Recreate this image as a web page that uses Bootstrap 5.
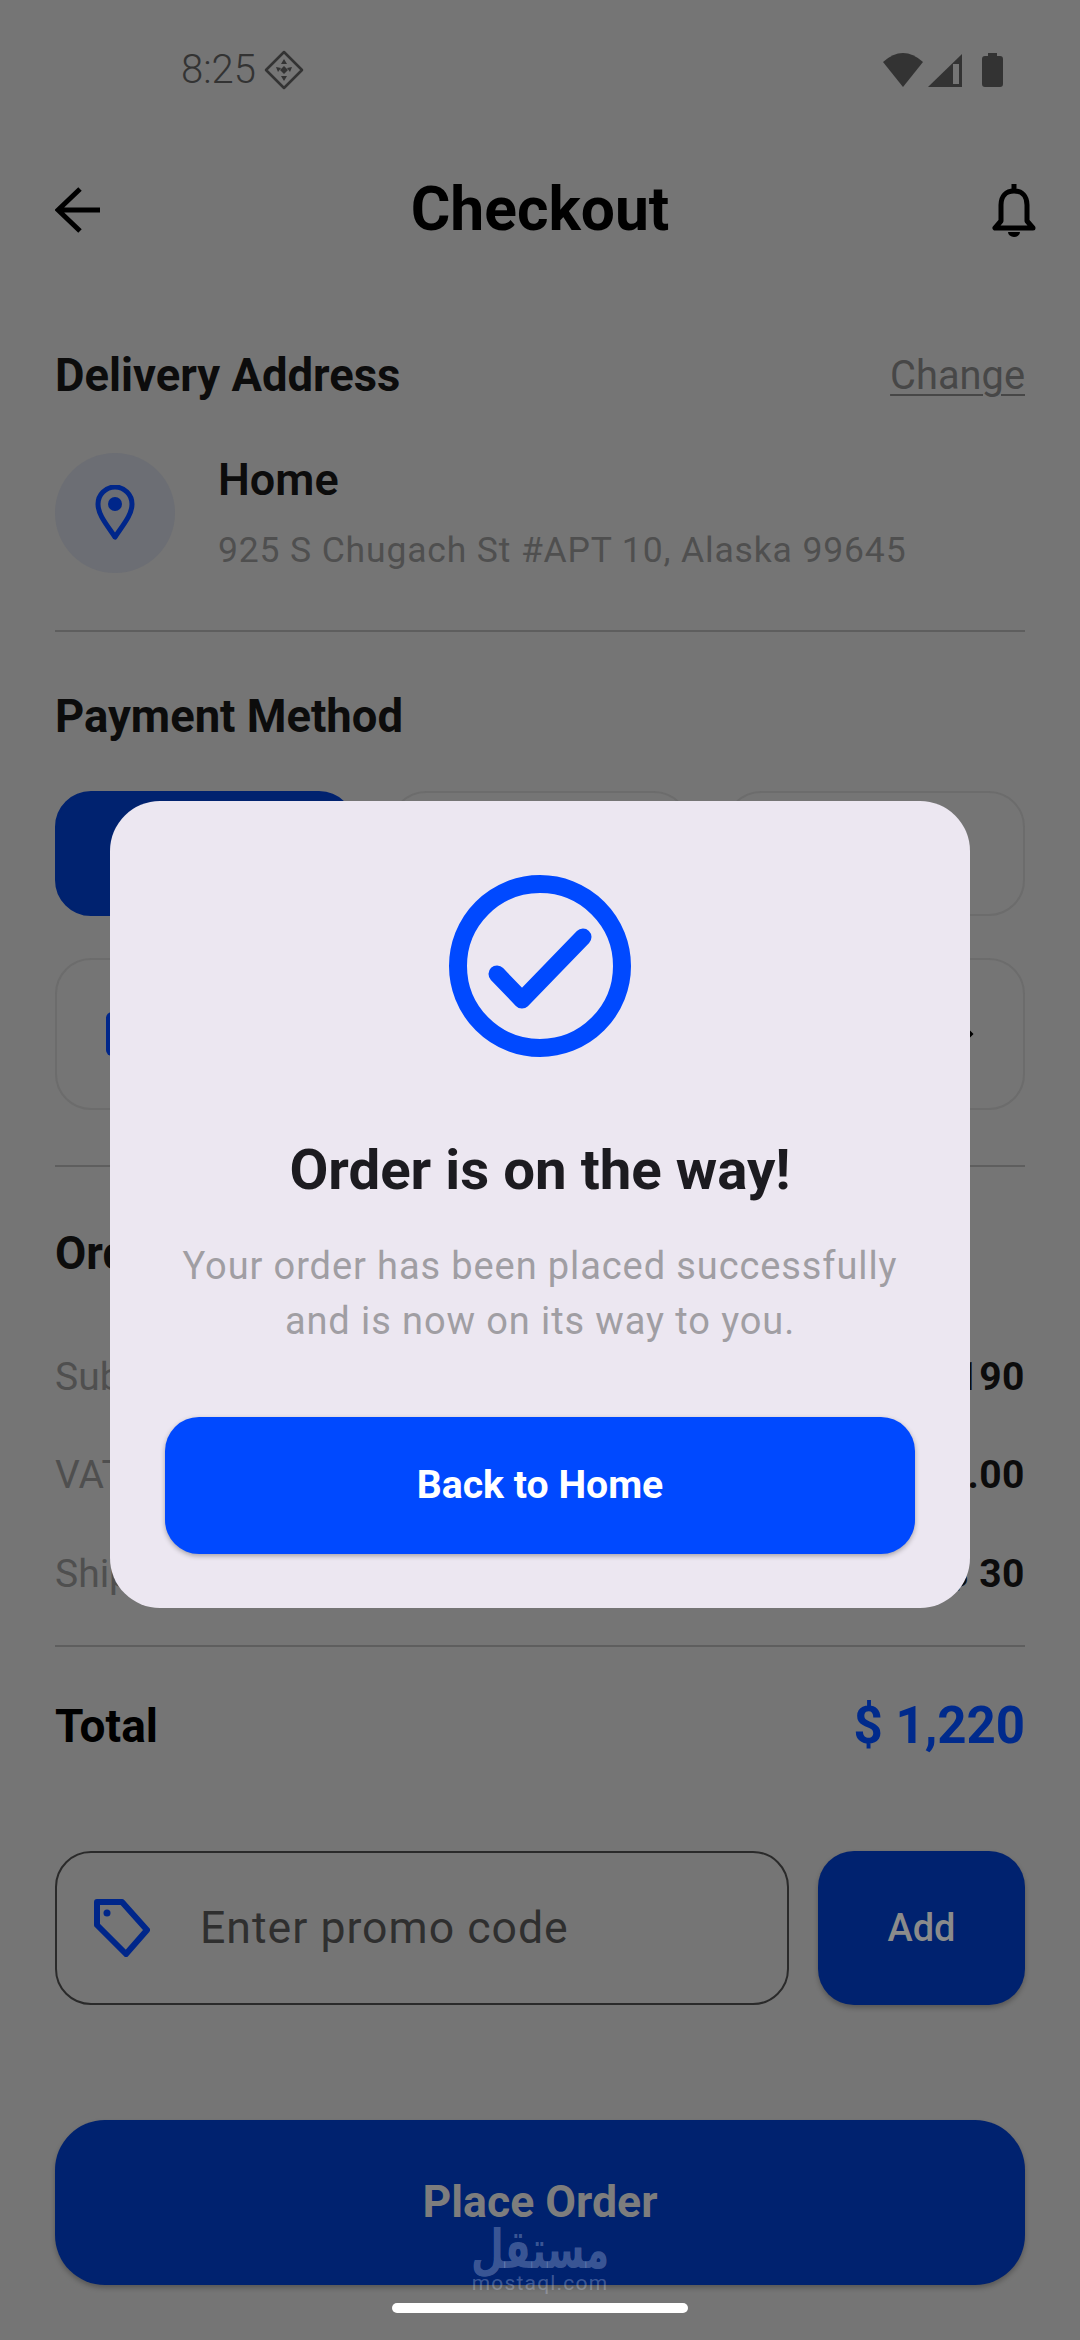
<!DOCTYPE html>
<html lang="en">
<head>
    <meta charset="UTF-8">
    <title>Checkout</title>
    <link href="https://cdn.jsdelivr.net/npm/bootstrap@5.3.0/dist/css/bootstrap.min.css" rel="stylesheet">
    <style>
        html, body { margin: 0; background: #757575; }
        .phone-page {
            position: relative;
            width: 1080px;
            height: 2340px;
            overflow: hidden;
            background: #757575;
            font-family: Roboto, "Liberation Sans", sans-serif;
            color: #0c0c0c;
        }
        .status-row { height: 140px; padding: 0 77px 0 181px; color: #333; font-size: 40px; font-weight: 300; }
        .top-row { height: 140px; padding: 0 55px; display: grid; grid-template-columns: 1fr auto 1fr; align-items: center; }
        .bell-icon { justify-self: end; margin-right: -11px; }
        .page-title { font-size: 60.5px; font-weight: 700; margin: 0; color: #000; }
        .body-wrap { padding: 0 55px; }
        .sec-row { height: 60px; }
        .sec-title { font-size: 45.4px; font-weight: 700; margin: 0; }
        .change-link { font-size: 39.8px; color: #474747; text-decoration: underline; text-underline-offset: 5px; text-decoration-thickness: 2px; }
        .pin-circle { width: 120px; height: 120px; background: #6c6e74; flex: none; }
        .addr-name { font-size: 45px; font-weight: 600; line-height: 60px; }
        .addr-line { font-size: 35.5px; line-height: 60px; margin-top: 10px; color: #4f4f4f; letter-spacing: .85px; }
        .thin-rule { height: 2px; background: #5e5e5e; }
        .pay-tab { width: 300px; height: 125px; border: 2px solid #6c6c6c; border-radius: 36px; }
        .pay-tab-on { background: #00226f; border-color: #00226f; }
        .pay-card { height: 152px; border: 2px solid #6c6c6c; border-radius: 36px; padding: 0 49px; }
        .card-thumb { width: 60px; height: 44px; background: #00268a; border-radius: 6px; }
        .sum-row { height: 60px; font-size: 39px; }
        .sum-label { color: #4f4f4f; }
        .sum-value { font-weight: 700; color: #0c0c0c; letter-spacing: .5px; }
        .total-label { font-size: 46px; font-weight: 700; color: #000; }
        .total-value { font-size: 51px; font-weight: 700; color: #002a8c; }
        .promo-box { width: 734px; height: 154px; border: 2px solid #2a2a2a; border-radius: 36px; padding-left: 37px; }
        .promo-text { font-size: 44.6px; color: #2f2f2f; margin-left: 50px; letter-spacing: 1px; }
        .add-btn { width: 207px; height: 154px; border: 0; border-radius: 36px; background: #00226f; color: #8b8b8b; font-size: 38px; font-weight: 500; box-shadow: 0 3px 5px rgba(0,0,0,.25); }
        .place-btn { height: 165px; border: 0; border-radius: 50px; background: #00226f; color: #7d7d7d; font-size: 44.6px; font-weight: 700; padding: 0 0 2px; line-height: 52px; box-shadow: 0 3px 5px rgba(0,0,0,.25); }
        .success-box {
            position: absolute;
            left: 110px;
            top: 801px;
            width: 860px;
            height: 807px;
            background: #ece7f1;
            border-radius: 50px;
            padding: 74px 55px 0;
            text-align: center;
        }
        .success-title { font-size: 56.4px; font-weight: 700; color: #1c1b20; margin: 83px 0 0; line-height: 60px; }
        .success-text { font-size: 38px; line-height: 55px; color: #a09ea3; margin: 39px 0 0; letter-spacing: .9px; }
        .home-btn { height: 137px; width: 750px; border: 0; border-radius: 34px; background: #0049ff; color: #fff; font-size: 39.2px; font-weight: 700; margin-top: 68px; box-shadow: 0 2px 5px rgba(0,0,0,.3); }
        .wm-wrap { position: absolute; left: 440px; top: 2230px; width: 200px; text-align: center; color: rgba(205,218,245,.3); }
        .wm-ar { font-family: "DejaVu Sans", sans-serif; font-weight: 700; font-size: 54px; line-height: 40px; transform: scaleX(.7); }
        .wm-en { font-size: 21px; line-height: 20px; letter-spacing: 1.2px; margin-top: 3px; }
        .home-bar { position: absolute; left: 392px; top: 2303px; width: 296px; height: 10px; background: #fff; border-radius: 5px; }
    </style>
</head>
<body>

<div class="phone-page">
    <!-- Status bar -->
    <div class="status-row d-flex align-items-center justify-content-between">
        <div class="d-flex align-items-center gap-2">
            <span>8:25</span>
            <svg width="40" height="40" viewBox="0 0 40 40">
                <path d="M20 2 38 20 20 38 2 20Z" fill="none" stroke="#333" stroke-width="2.5" stroke-linejoin="round"/>
                <path d="M20 9l3 5h-6zM12 17l5 1-3 4zM28 17l-5 1 3 4zM20 31l-3-5h6zM20 16l4 4-4 4-4-4z" fill="#333"/>
            </svg>
        </div>
        <svg width="120" height="36" viewBox="883 52 120 36" fill="#333">
            <path d="M883 62Q903 44 923 62L903 87Z"/>
            <path d="M928 87 962 54V87Z"/>
            <path d="M953 64h6v20h-6z" fill="#757575"/>
            <path d="M988 53h9v3h3q3 0 3 3v25q0 3-3 3h-15q-3 0-3-3V59q0-3 3-3h3z"/>
        </svg>
    </div>

    <!-- Header -->
    <div class="top-row">
        <svg width="46" height="46" viewBox="0 0 46 46" fill="none" stroke="#000" stroke-width="5">
            <path d="M45 23H4M25 2 3 23 25 44"/>
        </svg>
        <h1 class="page-title">Checkout</h1>
        <svg class="bell-icon" width="44" height="54" viewBox="0 0 44 54" fill="none" stroke="#000" stroke-width="5">
            <path d="M3 45H41L35 38V22C35 13 30 8 22 8S9 13 9 22V38Z" stroke-linejoin="round"/>
            <path d="M22 1V8"/>
            <path d="M16 49a6 5 0 0 0 12 0z" fill="#000" stroke="none"/>
        </svg>
    </div>

    <div class="body-wrap">
        <!-- Delivery address -->
        <div class="sec-row d-flex align-items-center justify-content-between" style="margin-top:66px">
            <h2 class="sec-title">Delivery Address</h2>
            <a class="change-link" href="#">Change</a>
        </div>
        <div class="d-flex" style="margin-top:47px">
            <div class="pin-circle rounded-circle d-flex align-items-center justify-content-center">
                <svg width="40" height="56" viewBox="0 0 40 56">
                    <path d="M20 52C12 40 3 30 3 19A17 17 0 0 1 37 19C37 30 28 40 20 52Z" fill="none" stroke="#00268a" stroke-width="5" stroke-linejoin="round"/>
                    <circle cx="20" cy="19" r="7" fill="#00268a"/>
                </svg>
            </div>
            <div style="margin:-3px 0 0 43px">
                <div class="addr-name">Home</div>
                <div class="addr-line">925 S Chugach St #APT 10, Alaska 99645</div>
            </div>
        </div>
        <div class="thin-rule" style="margin-top:50px"></div>

        <!-- Payment method -->
        <div class="sec-row d-flex align-items-center" style="margin-top:55px">
            <h2 class="sec-title">Payment Method</h2>
        </div>
        <div class="d-flex justify-content-between" style="margin-top:44px">
            <div class="pay-tab pay-tab-on"></div>
            <div class="pay-tab"></div>
            <div class="pay-tab"></div>
        </div>
        <div class="pay-card d-flex align-items-center justify-content-between" style="margin-top:42px">
            <div class="card-thumb"></div>
            <svg width="20" height="32" viewBox="0 0 20 32" fill="none" stroke="#000" stroke-width="5">
                <path d="M3 3 16 16 3 29"/>
            </svg>
        </div>
        <div class="thin-rule" style="margin-top:55px"></div>

        <!-- Order summary -->
        <div class="sec-row d-flex align-items-center" style="margin-top:57px">
            <h2 class="sec-title">Order Summary</h2>
        </div>
        <div class="sum-row d-flex align-items-center justify-content-between" style="margin-top:63px">
            <span class="sum-label">Subtotal</span><span class="sum-value">$ 1,190</span>
        </div>
        <div class="sum-row d-flex align-items-center justify-content-between" style="margin-top:38px">
            <span class="sum-label">VAT</span><span class="sum-value">$ 0.00</span>
        </div>
        <div class="sum-row d-flex align-items-center justify-content-between" style="margin-top:39px">
            <span class="sum-label">Shipping fee</span><span class="sum-value">$ 30</span>
        </div>
        <div class="thin-rule" style="margin-top:41px"></div>

        <!-- Total -->
        <div class="sec-row d-flex align-items-center justify-content-between" style="margin-top:49px">
            <span class="total-label">Total</span><span class="total-value">$ 1,220</span>
        </div>

        <!-- Promo code -->
        <div class="d-flex justify-content-between" style="margin-top:95px">
            <div class="promo-box d-flex align-items-center">
                <svg width="56" height="58" viewBox="0 0 56 58" fill="none" stroke="#00268a" stroke-width="6" stroke-linejoin="round">
                    <path d="M3 3H28L53 31 32 55 3 26Z"/>
                    <circle cx="13" cy="14" r="3.5" fill="#00268a" stroke="none"/>
                </svg>
                <span class="promo-text">Enter promo code</span>
            </div>
            <button class="add-btn btn" type="button">Add</button>
        </div>

        <button class="place-btn btn w-100 d-block" type="button" style="margin-top:115px">Place Order</button>
    </div>

    <!-- Watermark -->
    <div class="wm-wrap">
        <div class="wm-ar" dir="rtl">مستقل</div>
        <div class="wm-en">mostaql.com</div>
    </div>
    <div class="home-bar"></div>

    <!-- Success dialog -->
    <div class="success-box">
        <svg width="182" height="182" viewBox="0 0 182 182" fill="none" stroke="#0049ff">
            <circle cx="91" cy="91" r="82" stroke-width="18"/>
            <path d="M48 99 73 125 134 62" stroke-width="17" stroke-linecap="round" stroke-linejoin="round"/>
        </svg>
        <h2 class="success-title">Order is on the way!</h2>
        <p class="success-text">Your order has been placed successfully<br>and is now on its way to you.</p>
        <button class="home-btn btn" type="button">Back to Home</button>
    </div>
</div>

<script src="https://cdn.jsdelivr.net/npm/bootstrap@5.3.0/dist/js/bootstrap.bundle.min.js"></script>
</body>
</html>
